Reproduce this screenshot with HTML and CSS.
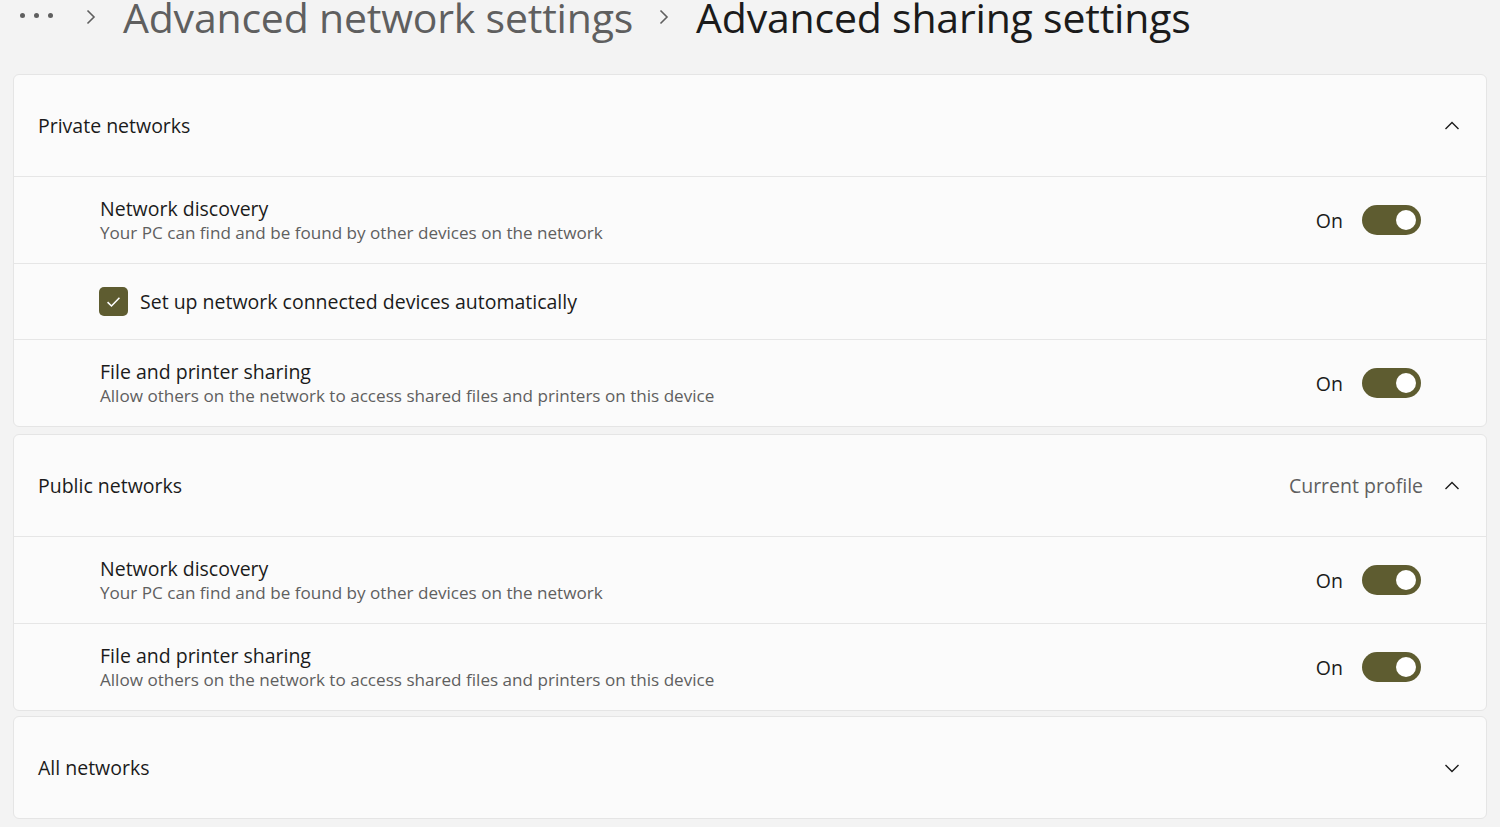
FILE: index.html
```html
<!DOCTYPE html>
<html lang="en">
<head>
    <meta charset="UTF-8">
    <title>Advanced sharing settings</title>
    <link rel="stylesheet" href="styles.css">
</head>
<body>
    <!-- Breadcrumb -->
    <div class="breadcrumb">
        <span class="dots"><i></i><i></i><i></i></span>
        <svg class="sep" viewBox="0 0 12 16"><path d="M2.5 1.5 L9 8 L2.5 14.5"/></svg>
        <span class="crumb">Advanced network settings</span>
        <svg class="sep" viewBox="0 0 12 16"><path d="M2.5 1.5 L9 8 L2.5 14.5"/></svg>
        <span class="crumb current">Advanced sharing settings</span>
    </div>

    <div class="sections">
        <!-- Private networks -->
        <div class="card">
            <div class="card-head">
                <span class="head-title">Private networks</span>
                <svg class="chevron" viewBox="0 0 16 16"><path d="M1.5 11 L8 4.5 L14.5 11"/></svg>
            </div>
            <div class="row">
                <div class="row-text">
                    <div class="row-title">Network discovery</div>
                    <div class="row-sub">Your PC can find and be found by other devices on the network</div>
                </div>
                <span class="state">On</span>
                <span class="toggle"><span class="knob"></span></span>
            </div>
            <div class="row row-check">
                <span class="checkbox">
                    <svg viewBox="0 0 16 16"><path d="M3 8.5 L6.3 11.8 L13 4.8"/></svg>
                </span>
                <span class="check-label">Set up network connected devices automatically</span>
            </div>
            <div class="row">
                <div class="row-text">
                    <div class="row-title">File and printer sharing</div>
                    <div class="row-sub">Allow others on the network to access shared files and printers on this device</div>
                </div>
                <span class="state">On</span>
                <span class="toggle"><span class="knob"></span></span>
            </div>
        </div>

        <!-- Public networks -->
        <div class="card">
            <div class="card-head">
                <span class="head-title">Public networks</span>
                <span class="head-note">Current profile</span>
                <svg class="chevron" viewBox="0 0 16 16"><path d="M1.5 11 L8 4.5 L14.5 11"/></svg>
            </div>
            <div class="row">
                <div class="row-text">
                    <div class="row-title">Network discovery</div>
                    <div class="row-sub">Your PC can find and be found by other devices on the network</div>
                </div>
                <span class="state">On</span>
                <span class="toggle"><span class="knob"></span></span>
            </div>
            <div class="row">
                <div class="row-text">
                    <div class="row-title">File and printer sharing</div>
                    <div class="row-sub">Allow others on the network to access shared files and printers on this device</div>
                </div>
                <span class="state">On</span>
                <span class="toggle"><span class="knob"></span></span>
            </div>
        </div>

        <!-- All networks -->
        <div class="card">
            <div class="card-head">
                <span class="head-title">All networks</span>
                <svg class="chevron" viewBox="0 0 16 16"><path d="M1.5 5 L8 11.5 L14.5 5"/></svg>
            </div>
        </div>
    </div>
</body>
</html>
```

FILE: styles.css
```css
* {
    margin: 0;
    padding: 0;
    box-sizing: border-box;
}

body {
    font-family: 'Open Sans', 'Noto Sans', sans-serif;
    background: #f3f3f3;
    color: #1b1b1b;
    width: 1500px;
    height: 827px;
    overflow: hidden;
}

/* Breadcrumb */
.breadcrumb {
    display: flex;
    align-items: center;
    height: 35px;
    padding-left: 20px;
    white-space: nowrap;
}

.dots {
    display: flex;
    gap: 9px;
    margin-right: 32px;
    margin-top: -4px;
}

.dots i {
    width: 5px;
    height: 5px;
    border-radius: 50%;
    background: #5f5f5f;
}

.sep {
    width: 12px;
    height: 16px;
    fill: none;
    stroke: #5f5f5f;
    stroke-width: 1.6;
    margin-right: 26px;
    margin-top: -1px;
}

.crumb {
    font-size: 41px;
    line-height: 35px;
    color: #5f5f5f;
    margin-right: 25px;
    letter-spacing: -0.2px;
}

.crumb.current {
    color: #1b1b1b;
}

/* Cards */
.sections {
    display: flex;
    flex-direction: column;
    gap: 7px;
    padding: 39px 13px 0 13px;
}

.card {
    background: #fbfbfb;
    border: 1px solid #e5e5e5;
    border-radius: 6px;
}

.card:last-child {
    margin-top: -2px;
}

.card-head {
    display: flex;
    align-items: center;
    height: 101px;
    padding: 0 26px 0 24px;
}

.head-title {
    font-size: 19.5px;
    flex: 1;
}

.head-note {
    font-size: 19.5px;
    color: #5f5f5f;
    margin-right: 21px;
}

.chevron {
    width: 16px;
    height: 16px;
    fill: none;
    stroke: #1b1b1b;
    stroke-width: 1.4;
}

.row {
    display: flex;
    align-items: center;
    height: 87px;
    border-top: 1.5px solid #e6e6e6;
    padding: 0 65px 0 86px;
}

.row-check {
    height: 76px;
}

.row-text {
    flex: 1;
}

.row-title {
    font-size: 19.5px;
    line-height: 25px;
}

.row-sub {
    font-size: 17.1px;
    line-height: 23px;
    color: #5f5f5f;
}

.state {
    font-size: 19.5px;
    margin-right: 19px;
}

.toggle {
    width: 59px;
    height: 30px;
    border-radius: 15px;
    background: #5e5c30;
    display: flex;
    align-items: center;
    justify-content: flex-end;
    padding-right: 5px;
}

.knob {
    width: 20px;
    height: 20px;
    border-radius: 50%;
    background: #ffffff;
}

.checkbox {
    width: 29px;
    height: 29px;
    border-radius: 5px;
    background: #5e5c30;
    display: flex;
    align-items: center;
    justify-content: center;
    margin-right: 12px;
    margin-left: -1px;
}

.checkbox svg {
    width: 19px;
    height: 19px;
    fill: none;
    stroke: #ffffff;
    stroke-width: 1.3;
}

.check-label {
    font-size: 19.5px;
}
```
